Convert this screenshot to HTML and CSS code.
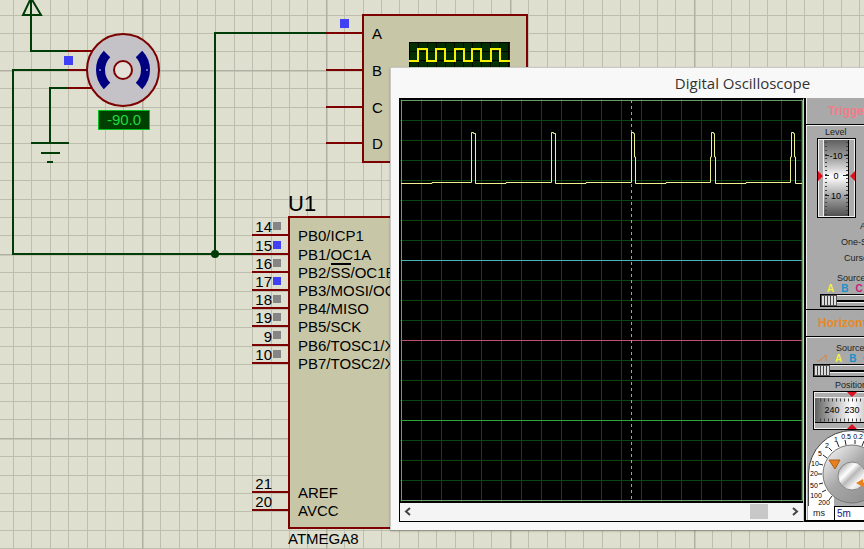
FILE: index.html
```
<!DOCTYPE html>
<html lang="en">
<head>
    <meta charset="UTF-8">
    <meta name="viewport" content="width=device-width, initial-scale=1.0">
    <title>Servo simulation</title>
    <link rel="stylesheet" href="styles.css">
</head>
<body>
    <main class="workspace">
        <svg class="schematic" role="img" aria-label="Schematic">
            <defs>
                <pattern id="sheet-grid" x="142" y="70" width="184" height="184" patternUnits="userSpaceOnUse">
                    <path class="grid-line" d="M18.5 0V184M37.5 0V184M55.5 0V184M73.5 0V184M92.5 0V184M110.5 0V184M129.5 0V184M147.5 0V184M165.5 0V184M0 18.5H184M0 37.5H184M0 55.5H184M0 73.5H184M0 92.5H184M0 110.5H184M0 129.5H184M0 147.5H184M0 165.5H184"/>
                    <path class="grid-line major" d="M.5 0V184M0 .5H184"/>
                </pattern>
                <pattern id="mini-grid" x="409" y="42" width="9" height="9" patternUnits="userSpaceOnUse">
                    <path d="M.5 0V9M0 .5H9" stroke="#000"/>
                </pattern>
            </defs>
            <rect width="100%" height="100%" fill="url(#sheet-grid)"/>

            <!-- wires -->
            <path class="wire" d="M31 0V51H68M68 70H13V254H252M68 88H50V143M215 254V33H326M31 143H69M41 153H60M47 162H53"/>
            <path class="wire" d="M31 -2L23 15H41Z"/>
            <circle cx="215" cy="254" r="4" fill="#003c08"/>

            <!-- servo motor -->
            <path class="pin" d="M68 51H93M68 70H87M68 88H93"/>
            <circle class="part motor" cx="123" cy="70" r="36"/>
            <path d="M107 54A23 23 0 0 0 107 86M139 54A23 23 0 0 1 139 86" fill="none" stroke="#000080" stroke-width="9"/>
            <path d="M99 70H101M146 70H148" stroke="#ddd"/>
            <circle class="part shaft" cx="123" cy="70" r="9"/>
            <rect x="98.5" y="110.5" width="51" height="19" fill="#004000" stroke="#00c020"/>
            <text class="readout" x="124" y="125" text-anchor="middle">-90.0</text>

            <!-- oscilloscope part -->
            <path class="pin" d="M326 33H363M326 70H363M326 107H363M326 143H363"/>
            <rect class="part" x="363" y="15" width="164" height="147"/>
            <text x="372" y="39">A</text>
            <text x="372" y="76">B</text>
            <text x="372" y="113">C</text>
            <text x="372" y="149">D</text>
            <rect x="409" y="42" width="101" height="30" fill="#002e00"/>
            <rect x="409" y="42" width="101" height="30" fill="url(#mini-grid)"/>
            <path d="M409 61H418V49H427V61H436V49H445V61H455V49H464V61H472V49H481V61H491V49H500V61H510" fill="none" stroke="#f4f000" stroke-width="2"/>

            <!-- microcontroller -->
            <path class="pin" d="M252 235H289M252 254H289M252 272H289M252 290H289M252 308H289M252 326H289M252 345H289M252 363H289M252 492H289M252 510H289"/>
            <rect class="part" x="289" y="217" width="164" height="311"/>
            <text class="part-ref" x="288" y="211">U1</text>
            <text x="288" y="544">ATMEGA8</text>
            <g text-anchor="end">
                <text x="272" y="232">14</text>
                <text x="272" y="251">15</text>
                <text x="272" y="269">16</text>
                <text x="272" y="287">17</text>
                <text x="272" y="305">18</text>
                <text x="272" y="323">19</text>
                <text x="272" y="342">9</text>
                <text x="272" y="360">10</text>
                <text x="272" y="489">21</text>
                <text x="272" y="507">20</text>
            </g>
            <text x="298" y="241">PB0/ICP1</text>
            <text x="298" y="260">PB1/OC1A</text>
            <text x="298" y="278">PB2/SS/OC1B</text>
            <text x="298" y="296">PB3/MOSI/OC2</text>
            <text x="298" y="314">PB4/MISO</text>
            <text x="298" y="332">PB5/SCK</text>
            <text x="298" y="351">PB6/TOSC1/XTAL1</text>
            <text x="298" y="369">PB7/TOSC2/XTAL2</text>
            <text x="298" y="498">AREF</text>
            <text x="298" y="516">AVCC</text>
            <path d="M331 264H351" stroke="#000" stroke-width="2"/>

            <!-- logic states -->
            <path fill="#4040f4" d="M64 56h9v9h-9zM340 19h9v9h-9zM273 241h8v8h-8zM273 277h8v8h-8z"/>
            <path fill="#858585" d="M273 222h8v8h-8zM273 259h8v8h-8zM273 295h8v8h-8zM273 313h8v8h-8zM273 331h8v8h-8zM273 350h8v8h-8z"/>
        </svg>

        <section class="scope-window">
            <h1 class="title">Digital Oscilloscope</h1>
            <div class="scope-body">
                <div class="screen">
                    <svg class="plot" width="403" height="403" role="img" aria-label="Channel traces">
                        <defs>
                            <pattern id="plot-grid" x="1" y="1" width="20" height="20" patternUnits="userSpaceOnUse">
                                <path d="M.5 0V20M0 .5H20" stroke="#0c4412"/>
                            </pattern>
                        </defs>
                        <rect width="403" height="403" fill="#000"/>
                        <rect width="403" height="403" fill="url(#plot-grid)"/>
                        <rect x="1.5" y="1.5" width="401" height="400" fill="none" stroke="#6c9c6c"/>
                        <path d="M1 161.5H402" stroke="#48b4b4"/>
                        <path d="M1 241.5H402" stroke="#c05078"/>
                        <path d="M1 321.5H402" stroke="#30a838"/>
                        <path d="M231.5 1V402" stroke="#a0a0a0" stroke-dasharray="3 3"/>
                        <path fill="none" stroke="#f0f090" d="M1 84.5H32V83.5H71.5V33.5H73.5V34.5H75.5V84.5H106V83.5H151.5V33.5H153.5V34.5H155.5V84.5H186V83.5H231.5V33.5H233.5V34.5H234.5V58H235.5V84.5H266V83.5H310.5V58H311.5V33.5H313.5V34.5H314.5V58H315.5V84.5H346V83.5H390.5V58H391.5V33.5H393.5V34.5H394.5V58H395.5V84.5H402"/>
                    </svg>
                    <div class="scrollbar">
                        <button class="arrow" aria-label="Scroll left"><svg width="7" height="9"><path d="M6 1L2 4.5L6 8"/></svg></button>
                        <div class="track"><div class="handle"></div></div>
                        <button class="arrow" aria-label="Scroll right"><svg width="7" height="9"><path d="M1 1L5 4.5L1 8"/></svg></button>
                    </div>
                </div>

                <div class="panel">
                    <h2 class="heading trigger">Trigger</h2>
                    <div class="section trigger-section">
                        <p class="level">Level</p>
                        <svg class="level-wheel" width="39" height="80">
                            <defs>
                                <linearGradient id="wheel" x2="0" y2="1">
                                    <stop offset="0" stop-color="#606060"/>
                                    <stop offset=".25" stop-color="#a4a4a4"/>
                                    <stop offset=".48" stop-color="#fff"/>
                                    <stop offset=".75" stop-color="#a0a0a0"/>
                                    <stop offset="1" stop-color="#505050"/>
                                </linearGradient>
                            </defs>
                            <rect x="1.5" y="1.5" width="36" height="77" fill="#adadad" stroke="#eee"/>
                            <rect x=".5" y=".5" width="38" height="79" fill="none" stroke="#000"/>
                            <rect x="7" y="2" width="25" height="76" fill="url(#wheel)"/>
                            <path d="M6.5 2V78" stroke="#eee"/>
                            <path d="M31.5 2V78" stroke="#000"/>
                            <path d="M9 4V77M30 4V77" stroke="#444" stroke-width="2" stroke-dasharray="1 3"/>
                            <path d="M8 17.5H12M27 17.5H31M8 37.5H12M26 37.5H31M8 57.5H12M27 57.5H31" stroke="#222"/>
                            <text x="19" y="21" text-anchor="middle">-10</text>
                            <text x="19" y="41" text-anchor="middle">0</text>
                            <text x="19" y="61" text-anchor="middle">10</text>
                            <path d="M1 33L6 38L1 43ZM38 33L33 38L38 43Z" fill="#e01020"/>
                        </svg>
                        <div class="options">
                            <p class="auto">Auto</p>
                            <p class="one-shot">One-Shot</p>
                            <p class="cursors">Cursors</p>
                        </div>
                        <div class="source">
                            <label for="trigger-source">Source</label>
                            <p class="channels"><span class="ch-a">A</span><span class="ch-b">B</span><span class="ch-c">C</span><span class="ch-d">D</span></p>
                            <input class="slider" id="trigger-source" type="range" min="0" max="3" value="0">
                        </div>
                    </div>

                    <h2 class="heading horizontal">Horizontal</h2>
                    <div class="section">
                        <div class="source time-source">
                            <label for="time-source">Source</label>
                            <p class="channels">
                                <svg width="12" height="8"><path d="M1 7H3L10 1V7" fill="none" stroke="#e08030"/></svg>
                                <span class="ch-a">A</span><span class="ch-b">B</span><span class="ch-c">C</span><span class="ch-d">D</span>
                            </p>
                            <input class="slider" id="time-source" type="range" min="0" max="4" value="0">
                        </div>
                        <p class="position">Position</p>
                        <svg class="position-wheel" width="78" height="39">
                            <defs>
                                <linearGradient id="drum">
                                    <stop offset="0" stop-color="#606060"/>
                                    <stop offset=".25" stop-color="#b8b8b8"/>
                                    <stop offset=".5" stop-color="#fff"/>
                                    <stop offset=".75" stop-color="#b8b8b8"/>
                                    <stop offset="1" stop-color="#606060"/>
                                </linearGradient>
                            </defs>
                            <rect x="1.5" y="1.5" width="75" height="36" fill="#adadad" stroke="#eee"/>
                            <rect x=".5" y=".5" width="77" height="38" fill="none" stroke="#000"/>
                            <rect x="2" y="7" width="74" height="25" fill="url(#drum)"/>
                            <path d="M2 6.5H76" stroke="#eee"/>
                            <path d="M2 31.5H76" stroke="#000"/>
                            <path d="M7 9H76M7 29H76" stroke="#444" stroke-width="3" stroke-dasharray="1 3"/>
                            <text x="19" y="22" text-anchor="middle">240</text>
                            <text x="39" y="22" text-anchor="middle">230</text>
                            <text x="59" y="22" text-anchor="middle">220</text>
                            <path d="M34 1H44L39 6ZM34 38H44L39 33Z" fill="#e01020"/>
                        </svg>
                        <svg class="dial" width="90" height="76">
                            <defs>
                                <linearGradient id="knob" y2="1">
                                    <stop offset=".15" stop-color="#e4e4e4"/>
                                    <stop offset=".45" stop-color="#a8a8a8"/>
                                    <stop offset="1" stop-color="#888"/>
                                </linearGradient>
                                <linearGradient id="hub" y2="1">
                                    <stop offset=".1" stop-color="#a8a8a8"/>
                                    <stop offset=".35" stop-color="#fff"/>
                                    <stop offset=".5" stop-color="#b8b8b8"/>
                                    <stop offset=".7" stop-color="#f4f4f4"/>
                                    <stop offset="1" stop-color="#c0c0c0"/>
                                </linearGradient>
                            </defs>
                            <path d="M.5 77V44A43.5 43.5 0 0 1 87.5 44V77Z" fill="#fff" stroke="#444"/>
                            <path d="M38 15L37 10M31 17L29 12M24 21L21 18M19 28L15 25M15 35L11 34M14 44H10M15 53L11 54M18 60L14 62M24 66L21 70M47 14V10M54 16L56 11" stroke="#222"/>
                            <path d="M26 62V77H90V62Z" fill="#a9a9a9"/>
                            <circle cx="44" cy="44" r="29" fill="url(#knob)" stroke="#777"/>
                            <circle cx="44" cy="46" r="14" fill="url(#hub)" stroke="#888"/>
                            <path d="M21 30H32L27 39Z" fill="#e88020" stroke="#a86018"/>
                            <path d="M48 53L55 49V57Z" fill="#e88020"/>
                            <g class="dial-text" text-anchor="middle">
                                <text x="28" y="12">1</text>
                                <text x="38" y="9">0.5</text>
                                <text x="50" y="9">0.2</text>
                                <text x="61" y="13">0.1</text>
                                <text x="19" y="18">2</text>
                                <text x="12" y="26">5</text>
                                <text x="7" y="36">10</text>
                                <text x="6" y="46">20</text>
                                <text x="6" y="58">50</text>
                                <text x="8" y="68">100</text>
                                <text x="16" y="75">200</text>
                            </g>
                        </svg>
                        <div class="timebase">
                            <label for="timebase">ms</label>
                            <input id="timebase" type="text" value="5m">
                        </div>
                    </div>
                </div>
            </div>
        </section>
    </main>
</body>
</html>
```
FILE: styles.css
```
* {
    box-sizing: border-box;
}
body {
    margin: 0;
    font-family: "Liberation Sans", Arial, sans-serif;
    color: #222;
}
h1, h2, p {
    margin: 0;
}
svg {
    display: block;
}
.workspace {
    position: relative;
    height: 100vh;
    overflow: hidden;
    background-color: #dedfce;
}

/* schematic sheet */
.schematic {
    width: 100%;
    height: 100%;
    font-size: 15px;
    fill: #000;
}
.grid-line {
    stroke: #bdbeae;
}
.grid-line.major {
    stroke: #b0b1a2;
    stroke-width: 2;
}
.wire {
    fill: none;
    stroke: #003c08;
    stroke-width: 2;
}
.pin {
    fill: none;
    stroke: #7c0000;
    stroke-width: 2;
}
.part {
    fill: #c7c7a8;
    stroke: #7c0000;
    stroke-width: 2;
}
.motor {
    fill: #c4c2c6;
}
.shaft {
    fill: #e4e2d8;
}
.part-ref {
    font-size: 22px;
}
.readout {
    fill: #20d840;
}

/* oscilloscope window */
.scope-window {
    position: absolute;
    left: 390px;
    top: 67px;
    width: 704px;
    padding: 0 9px 8px;
    background-color: #f8f8f8;
    border-left: 1px solid #c8c8c8;
    border-top: 1px solid #c8c8c8;
    box-shadow: 0 1px 2px rgba(0,0,0,0.3);
}
.title {
    height: 30px;
    line-height: 30px;
    font-family: "Open Sans", "Noto Sans", sans-serif;
    font-size: 15px;
    font-weight: normal;
    text-align: center;
    color: #333;
}
.scope-body {
    display: flex;
}
.screen {
    margin-left: -1px;
    border: 1px solid #000;
    border-right-color: #ccc;
}
.scrollbar {
    display: flex;
    align-items: center;
    height: 18px;
    border-top: 1px solid #000;
    background-color: #f4f4f4;
}
.arrow {
    display: flex;
    align-items: center;
    justify-content: center;
    width: 15px;
    height: 16px;
    padding: 0;
    border: none;
    background: none;
}
.arrow path {
    fill: none;
    stroke: #444;
    stroke-width: 2;
}
.track {
    flex: 1;
    display: flex;
    justify-content: flex-end;
    padding-right: 20px;
}
.handle {
    width: 18px;
    height: 15px;
    background-color: #c8c8c8;
}

/* control panel */
.panel {
    flex: 1;
    overflow: hidden;
    border-left: 2px solid #000;
    border-bottom: 2px solid #000;
    box-shadow: inset 1px 0 0 #eee;
    background-color: #a9a9a9;
    font-size: 9px;
    line-height: 12px;
}
.heading {
    height: 27px;
    line-height: 27px;
    border-bottom: 1px solid #000;
    font-size: 12px;
}
.trigger {
    padding-left: 22px;
    color: #f07c88;
}
.horizontal {
    height: 28px;
    padding-left: 12px;
    border-top: 1px solid #000;
    color: #e88824;
}
.section {
    border-top: 1px solid #eee;
}
.trigger-section {
    height: 184px;
}
.level {
    padding-left: 19px;
}
.level-wheel {
    margin-left: 11px;
}
.options {
    line-height: 16px;
}
.auto {
    padding-left: 54px;
}
.one-shot {
    padding-left: 35px;
}
.cursors {
    padding-left: 38px;
}
.source {
    padding: 6px 0 0 14px;
}
.source label {
    display: block;
    padding-left: 17px;
}
.channels {
    display: flex;
    gap: 7px;
    height: 10px;
    padding-left: 7px;
    font-size: 10px;
    font-weight: bold;
    line-height: 10px;
}
.ch-a { color: #f0f040; }
.ch-b { color: #2090c8; }
.ch-c { color: #c82080; }
.ch-d { color: #20a040; }
.slider {
    appearance: none;
    display: block;
    width: 78px;
    height: 13px;
    margin: 0;
    border: 1px solid #000;
    background: linear-gradient(#eee 1px, #a9a9a9 1px, #a9a9a9 5px, #000 5px, #000 7px, #eee 7px, #eee 8px, #a9a9a9 8px);
}
.slider::-webkit-slider-thumb {
    appearance: none;
    width: 16px;
    height: 11px;
    border: 1px solid #555;
    background: repeating-linear-gradient(90deg, #ddd 0 2px, #444 2px 3px);
}
.time-source {
    padding: 4px 0 0 7px;
}
.time-source label {
    padding-left: 23px;
}
.time-source .channels {
    padding-left: 3px;
}
.position {
    padding: 2px 0 0 29px;
}
.position-wheel {
    margin-left: 7px;
}
.dial {
    margin-left: 2px;
}
.dial-text {
    font-size: 7px;
}
.timebase {
    display: flex;
    margin-left: 2px;
}
.timebase label {
    width: 26px;
    padding-left: 5px;
    line-height: 14px;
    background-color: #fff;
}
.timebase input {
    width: 60px;
    height: 14px;
    padding: 0 2px;
    border: 1px solid #000;
    border-bottom: none;
    font-family: inherit;
    font-size: 10px;
    color: #202080;
}
```
